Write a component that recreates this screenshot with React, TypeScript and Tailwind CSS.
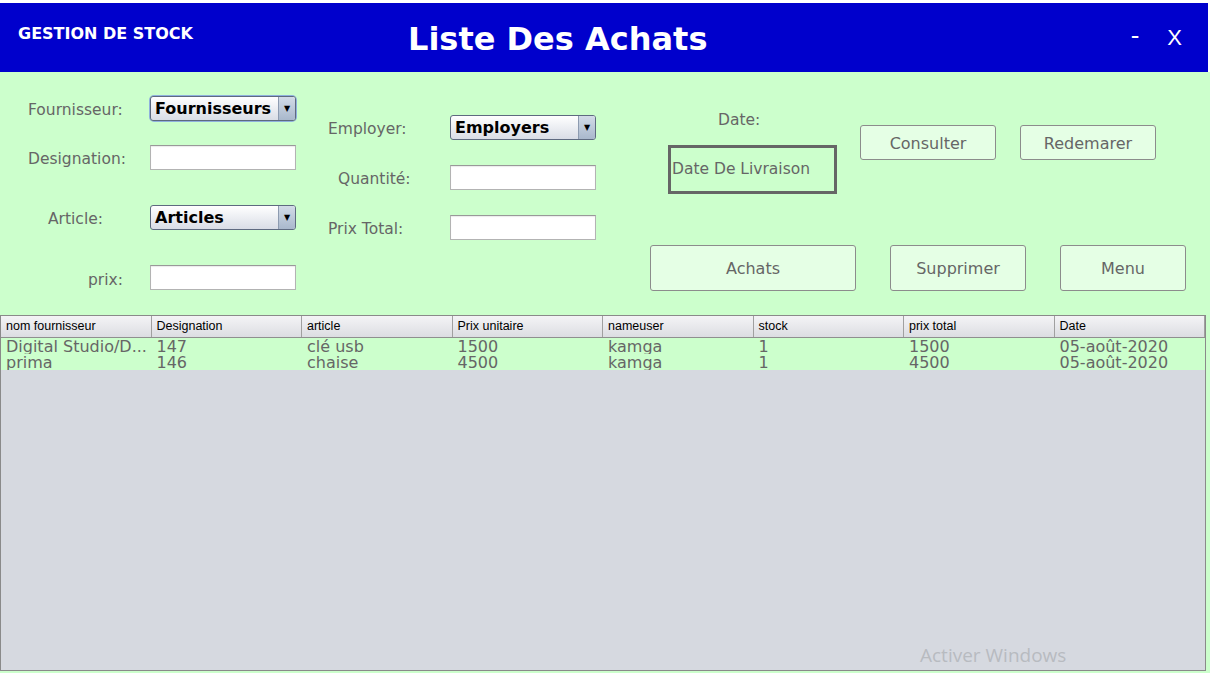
import { ReactNode } from 'react'

const label = "text-[15.5px] text-[#666] leading-[20px] whitespace-nowrap relative top-[1px]"

function Combo({ text }: { text: string }) {
  return (
    <div className="w-[146px] h-[25px] flex rounded-[3px] border border-[#5e6a80] bg-gradient-to-b from-white to-[#d9dde6] overflow-hidden">
      <div className="flex-1 pl-[4px] text-[16px] font-bold text-black leading-[24px] whitespace-nowrap">{text}</div>
      <div className="w-[17px] border-l border-[#8d9bb0] bg-gradient-to-b from-[#d2dbe7] to-[#a9b8cc] flex items-center justify-center text-[8px] text-black">▼</div>
    </div>
  )
}

function Field() {
  return <div className="w-[146px] h-[25px] bg-white border border-[#b3b3b3] border-t-[#999] shadow-[inset_0_1px_1px_rgba(0,0,0,0.08)]" />
}

function Btn({ children, className }: { children: ReactNode; className: string }) {
  return (
    <div className={`flex items-center justify-center pt-[2px] rounded-[3px] border border-[#8c8c8c] bg-[#e5ffe5] text-[16px] text-[#666] ${className}`}>
      {children}
    </div>
  )
}

const cols = ['nom fournisseur', 'Designation', 'article', 'Prix unitaire', 'nameuser', 'stock', 'prix total', 'Date']
const rows = [
  ['Digital Studio/D...', '147', 'clé usb', '1500', 'kamga', '1', '1500', '05-août-2020'],
  ['prima', '146', 'chaise', '4500', 'kamga', '1', '4500', '05-août-2020'],
]

export default function App() {
  return (
    <div className="w-[1210px] h-[673px] bg-white overflow-hidden font-['DejaVu_Sans',sans-serif]">
      <div className="h-[3px]" />
      <div className="w-[1208px] h-[69px] bg-[#0000cc] flex items-center text-white">
        <div className="w-[408px] pl-[18px] -mt-[8px] text-[16px] font-bold">GESTION DE STOCK</div>
        <div className="text-[32px] font-bold leading-none mt-[2px]">Liste Des Achats</div>
        <div className="flex-1" />
        <div className="text-[24px] -mt-[4px] mr-[28px]">-</div>
        <div className="text-[22px] font-['Liberation_Sans',sans-serif] mr-[26px]">X</div>
      </div>

      <div className="bg-[#ccffcc] h-[601px]">
        <div className="h-[243px] flex">
          <div className="w-[300px] flex flex-col pt-[24px]">
            <div className="flex items-center h-[25px]">
              <div className="w-[150px] pl-[28px]"><span className={label}>Fournisseur:</span></div>
              <div className="rounded-[4px] shadow-[0_0_0_1px_#8fb0dd]"><Combo text="Fournisseurs" /></div>
            </div>
            <div className="flex items-center h-[25px] mt-[24px]">
              <div className="w-[150px] pl-[28px]"><span className={label}>Designation:</span></div>
              <Field />
            </div>
            <div className="flex items-center h-[25px] mt-[35px]">
              <div className="w-[150px] pl-[48px]"><span className={label}>Article:</span></div>
              <Combo text="Articles" />
            </div>
            <div className="flex items-center h-[25px] mt-[35px]">
              <div className="w-[150px] pl-[88px] pt-[2px]"><span className={label}>prix:</span></div>
              <Field />
            </div>
          </div>

          <div className="w-[300px] flex flex-col pt-[43px]">
            <div className="flex items-center h-[25px]">
              <div className="w-[150px] pl-[28px]"><span className={label}>Employer:</span></div>
              <Combo text="Employers" />
            </div>
            <div className="flex items-center h-[25px] mt-[25px]">
              <div className="w-[150px] pl-[38px]"><span className={label}>Quantité:</span></div>
              <Field />
            </div>
            <div className="flex items-center h-[25px] mt-[25px]">
              <div className="w-[150px] pl-[28px]"><span className={label}>Prix Total:</span></div>
              <Field />
            </div>
          </div>

          <div className="flex-1 flex flex-col">
            <div className="h-[173px] flex items-start">
              <div className="ml-[68px] w-[169px] flex flex-col pt-[37px]">
                <div className={`${label} pl-[50px] h-[20px]`}>Date:</div>
                <div className="mt-[16px] h-[49px] border-[3px] border-[#666] flex items-center pl-[1px] pt-[1px] text-[15.5px] text-[#666] whitespace-nowrap">
                  Date De Livraison
                </div>
              </div>
              <Btn className="ml-[23px] mt-[53px] w-[136px] h-[35px]">Consulter</Btn>
              <Btn className="ml-[24px] mt-[53px] w-[136px] h-[35px]">Redemarer</Btn>
            </div>
            <div className="flex">
              <Btn className="ml-[50px] w-[206px] h-[46px]">Achats</Btn>
              <Btn className="ml-[34px] w-[136px] h-[46px]">Supprimer</Btn>
              <Btn className="ml-[34px] w-[126px] h-[46px]">Menu</Btn>
            </div>
          </div>
        </div>

        <div className="relative w-[1206px] h-[356px] border border-[#8a8a8a] bg-[#d6d9e0]">
          <div className="grid grid-cols-8 h-[22px] border-b border-[#8f8f8f] bg-gradient-to-b from-[#f4f4f6] to-[#dcdde2] font-['Liberation_Sans',sans-serif] text-[12.5px] text-black">
            {cols.map((c) => (
              <div key={c} className="border-r border-[#a0a0a0] pl-[5px] leading-[21px] whitespace-nowrap">{c}</div>
            ))}
          </div>
          {rows.map((r, i) => (
            <div key={i} className="grid grid-cols-8 h-[16px] bg-[#ccffcc] overflow-hidden text-[16px] text-[#666] leading-[16px]">
              {r.map((c, j) => (
                <div key={j} className="pl-[5px] pt-[1px] h-[16px] whitespace-nowrap overflow-hidden">{c}</div>
              ))}
            </div>
          ))}
          <div className="absolute left-[919px] top-[325px] text-[19px] text-[#b8bbc0] font-['Open_Sans',sans-serif]">Activer Windows</div>
        </div>
      </div>
    </div>
  )
}
